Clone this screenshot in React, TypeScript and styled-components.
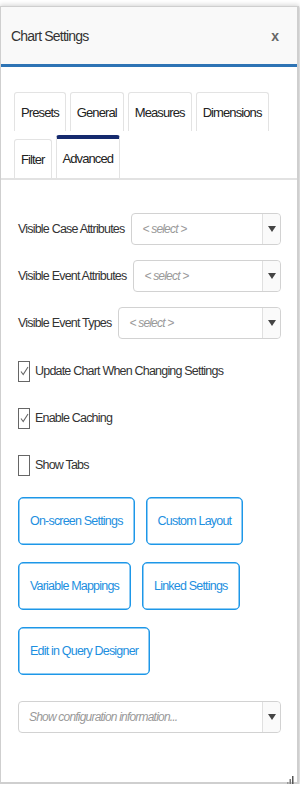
import React from "react";
import styled, {createGlobalStyle} from "styled-components";

const GlobalStyle = createGlobalStyle`
  body {
    margin: 0;
    background: #fff;
    font-family: "Liberation Sans", Arial, sans-serif;
    letter-spacing: -0.8px;
  }
`;

const Window = styled.div`
  margin-top: 6px;
  width: 296px;
  height: 775px;
  border: 1px solid #cfcfcf;
  border-bottom-width: 2px;
  border-right-width: 2px;
  box-shadow: 0 -2px 4px rgba(0, 0, 0, 0.12), 1px 1px 2px rgba(0, 0, 0, 0.15);
  display: flex;
  flex-direction: column;
  position: relative;
  background: #fff;
`;

const Header = styled.div`
  height: 57px;
  background: #f9f9f9;
  border-bottom: 3px solid #2e74b5;
  display: flex;
  align-items: center;
  justify-content: space-between;
  padding: 0 18px 0 10px;
  color: #333;
  font-size: 14px;
`;

const Close = styled.span`
  color: #666;
  font-size: 14px;
  font-weight: bold;
  letter-spacing: 0;
`;

const TabStrip = styled.div`
  display: flex;
  flex-wrap: wrap;
  gap: 8px 4px;
  padding: 25px 12px 0 13px;
  border-bottom: 2px solid #e2e2e2;
`;

const Tab = styled.div<{ $active?: boolean }>`
  box-sizing: border-box;
  padding: 0 6px;
  display: flex;
  align-items: center;
  font-size: 13px;
  letter-spacing: -0.9px;
  color: #222;
  border: 1px solid #e3e3e3;
  border-bottom: none;
  border-top: ${p => p.$active ? "4px solid #152a6e" : "1px solid #e3e3e3"};
  border-radius: 3px 3px 0 0;
  margin-top: ${p => p.$active ? "-4px" : "0"};
  height: ${p => p.$active ? "43px" : "39px"};
`;

const Content = styled.div`
  padding: 33px 16px 0 17px;
  display: flex;
  flex-direction: column;
`;

const FieldRow = styled.div`
  display: flex;
  align-items: center;
  gap: 7px;
  margin-bottom: 15px;
  font-size: 12.5px;
  color: #333;
`;

const Label = styled.span`
  white-space: nowrap;
`;

const SelectBox = styled.div`
  flex: 1;
  height: 32px;
  box-sizing: border-box;
  border: 1px solid #d2d2d2;
  border-radius: 4px;
  display: flex;
  align-items: stretch;
  background: #fff;
`;

const Placeholder = styled.span`
  flex: 1;
  display: flex;
  align-items: center;
  padding-left: 10px;
  font-size: 12px;
  font-style: italic;
  color: #999;
`;

const Arrow = styled.span`
  width: 17px;
  border-left: 1px solid #e0e0e0;
  background: #fafafa;
  border-radius: 0 4px 4px 0;
  display: flex;
  align-items: center;
  justify-content: center;
`;

const CheckRow = styled.label`
  display: flex;
  align-items: center;
  gap: 5px;
  height: 22px;
  margin-top: 25px;
  font-size: 12.5px;
  color: #333;
  &:first-of-type {
    margin-top: 6px;
  }
`;

const Box = styled.span`
  width: 10px;
  height: 19px;
  border: 1px solid #666;
  display: flex;
  align-items: center;
  justify-content: center;
`;

const ButtonGrid = styled.div`
  display: flex;
  flex-direction: column;
  gap: 17px;
  margin-top: 21px;
`;

const ButtonRow = styled.div`
  display: flex;
  gap: 11px;
`;

const Button = styled.button`
  height: 48px;
  padding: 0 11px;
  background: #fff;
  border: 1px solid #1d97e8;
  box-shadow: inset 0 0 0 0.5px #1d97e8;
  border-radius: 5px;
  color: #1d8fe0;
  font-family: inherit;
  letter-spacing: inherit;
  font-size: 12.5px;
`;

const InfoSelect = styled(SelectBox)`
  flex: none;
  margin-top: 26px;
`;

const Grip = styled.div`
  position: absolute;
  right: 3px;
  bottom: 2px;
  width: 8px;
  height: 9px;
`;

function Caret() {
    return (
        <svg width="8" height="6" viewBox="0 0 8 6">
            <path d="M0 0 H8 L4 6 Z" fill="#444"/>
        </svg>
    );
}

function Select({text}: { text: string }) {
    return (
        <SelectBox>
            <Placeholder>{text}</Placeholder>
            <Arrow><Caret/></Arrow>
        </SelectBox>
    );
}

function Check({checked, children}: { checked?: boolean, children: React.ReactNode }) {
    return (
        <CheckRow>
            <Box>
                {checked && (
                    <svg width="9" height="10" viewBox="0 0 9 10">
                        <path d="M1 5.5 L3.2 8.5 L8 1" stroke="#666" strokeWidth="1.1" fill="none"/>
                    </svg>
                )}
            </Box>
            {children}
        </CheckRow>
    );
}

export default function App() {
    return (
        <>
            <GlobalStyle/>
            <Window>
                <Header>
                    <span>Chart Settings</span>
                    <Close>x</Close>
                </Header>
                <TabStrip>
                    <Tab>Presets</Tab>
                    <Tab>General</Tab>
                    <Tab>Measures</Tab>
                    <Tab>Dimensions</Tab>
                    <Tab>Filter</Tab>
                    <Tab $active>Advanced</Tab>
                </TabStrip>
                <Content>
                    <FieldRow>
                        <Label>Visible Case Attributes</Label>
                        <Select text="< select >"/>
                    </FieldRow>
                    <FieldRow>
                        <Label>Visible Event Attributes</Label>
                        <Select text="< select >"/>
                    </FieldRow>
                    <FieldRow>
                        <Label>Visible Event Types</Label>
                        <Select text="< select >"/>
                    </FieldRow>
                    <Check checked>Update Chart When Changing Settings</Check>
                    <Check checked>Enable Caching</Check>
                    <Check>Show Tabs</Check>
                    <ButtonGrid>
                        <ButtonRow>
                            <Button>On-screen Settings</Button>
                            <Button>Custom Layout</Button>
                        </ButtonRow>
                        <ButtonRow>
                            <Button>Variable Mappings</Button>
                            <Button>Linked Settings</Button>
                        </ButtonRow>
                        <ButtonRow>
                            <Button>Edit in Query Designer</Button>
                        </ButtonRow>
                    </ButtonGrid>
                    <InfoSelect>
                        <Placeholder>Show configuration information...</Placeholder>
                        <Arrow><Caret/></Arrow>
                    </InfoSelect>
                </Content>
                <Grip>
                    <svg width="8" height="9" viewBox="0 0 8 9">
                        <rect x="6" y="0" width="1.5" height="9" fill="#555"/>
                        <rect x="3.5" y="3" width="1.5" height="6" fill="#777"/>
                        <rect x="1" y="6" width="1.5" height="3" fill="#999"/>
                    </svg>
                </Grip>
            </Window>
        </>
    );
}
